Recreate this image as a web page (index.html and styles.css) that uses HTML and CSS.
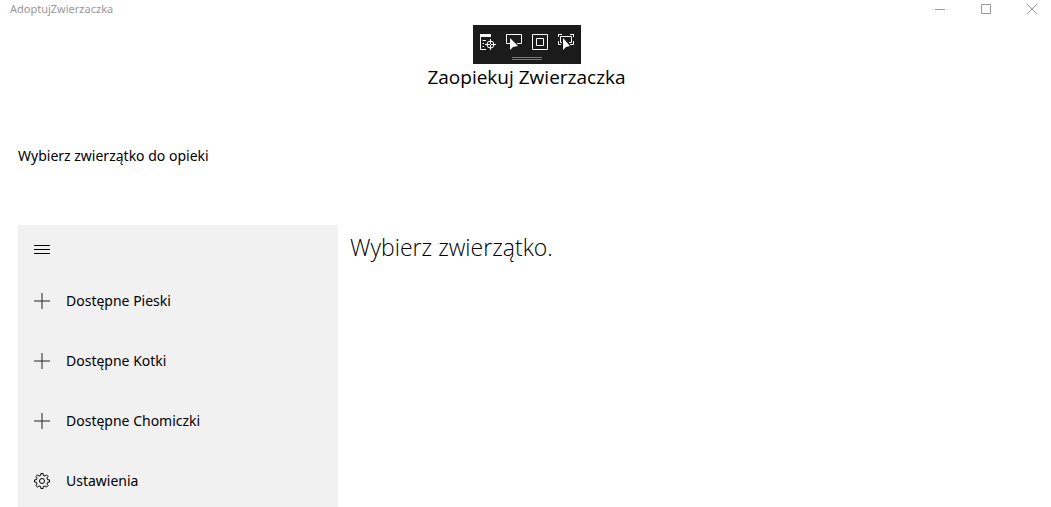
FILE: index.html
```html
<!DOCTYPE html>
<html lang="pl">
<head>
<meta charset="utf-8">
<meta name="viewport" content="width=device-width, initial-scale=1">
<title>AdoptujZwierzaczka</title>
<link rel="stylesheet" href="styles.css">
</head>
<body>
<div class="window">
  <header class="titlebar">
    <span class="app-name">AdoptujZwierzaczka</span>
    <div class="caption-buttons">
      <button class="caption-button" type="button" aria-label="Minimalizuj">
        <svg class="caption-icon" viewBox="0 0 10 10"><path d="M0 5.5H10"/></svg>
      </button>
      <button class="caption-button" type="button" aria-label="Maksymalizuj">
        <svg class="caption-icon" viewBox="0 0 10 10"><path d="M.5 .5H9.5V9.5H.5Z"/></svg>
      </button>
      <button class="caption-button" type="button" aria-label="Zamknij">
        <svg class="caption-icon" viewBox="0 0 10 10"><path d="M0 0L10 10M10 0L0 10"/></svg>
      </button>
    </div>
  </header>

  <div class="debug-bar" role="toolbar" aria-label="Narzędzia">
    <button class="debug-button" type="button" aria-label="Drzewo wizualne">
      <svg class="icon light" viewBox="0 0 16 16"><path d="M0 0H11V3H0Z" fill="#fff" stroke="none"/><path d="M.5 3V15.5H6M2.5 6.5H6M2.5 9.500H4M2.500 12.500H4M10.500 5V16M5 10.500H16"/><circle cx="10.500" cy="10.500" r="3.500"/><path d="M10 10H11V11H10Z" fill="#1b1b1b" stroke="none"/></svg>
    </button>
    <button class="debug-button" type="button" aria-label="Wybierz element">
      <svg class="icon light" viewBox="0 0 16 16"><path d="M4 9.500H.5V.5H15.500V9.500H11"/><path d="M4 4V16L7 13L12 12Z" fill="#fff" stroke="none"/></svg>
    </button>
    <button class="debug-button" type="button" aria-label="Pokaż układ">
      <svg class="icon light" viewBox="0 0 16 16"><path d="M.5 .5H15.500V15.500H.5ZM4.500 4.500H11.500V11.500H4.500Z"/></svg>
    </button>
    <button class="debug-button" type="button" aria-label="Śledź fokus">
      <svg class="icon light" viewBox="0 0 16 16"><path d="M0 .5H4M.5 0V3M12 .5H16M15.500 0V3M.5 7V10.500H3M15.500 7V10.500H12M4 8.500H2.500V2.500H13.500V8.500H11"/><path d="M5 4V16L8 13L12 12Z" fill="#fff" stroke="none"/></svg>
    </button>
    <span class="grip"></span>
  </div>

  <main class="page">
    <h1 class="page-title">Zaopiekuj Zwierzaczka</h1>
    <p class="prompt">Wybierz zwierzątko do opieki</p>
    <div class="split-view">
      <nav class="pane">
        <button class="menu-toggle" type="button" aria-label="Menu">
          <svg class="icon" viewBox="0 0 16 16"><path d="M0 4.500H16M0 8.500H16M0 12.500H16"/></svg>
        </button>
        <button class="nav-item" type="button">
          <svg class="icon plus" viewBox="0 0 16 16"><path d="M8 0V16M0 8H16"/></svg>
          <span>Dostępne Pieski</span>
        </button>
        <button class="nav-item" type="button">
          <svg class="icon plus" viewBox="0 0 16 16"><path d="M8 0V16M0 8H16"/></svg>
          <span>Dostępne Kotki</span>
        </button>
        <button class="nav-item" type="button">
          <svg class="icon plus" viewBox="0 0 16 16"><path d="M8 0V16M0 8H16"/></svg>
          <span>Dostępne Chomiczki</span>
        </button>
        <button class="nav-item" type="button">
          <svg class="icon" viewBox="0 0 16 16"><path stroke-linejoin="round" d="M6.700 2.400L6.900 .5H9.100L9.300 2.400L11 3.100L12.500 1.900L14.100 3.500L12.900 5L13.600 6.700L15.500 6.900V9.100L13.600 9.300L12.900 11L14.100 12.500L12.500 14.100L11 12.900L9.300 13.600L9.100 15.500H6.900L6.700 13.600L5 12.900L3.500 14.100L1.900 12.500L3.100 11L2.400 9.300L.5 9.100V6.900L2.400 6.700L3.100 5L1.900 3.500L3.500 1.900L5 3.100Z"/><circle cx="8" cy="8" r="2.500"/></svg>
          <span>Ustawienia</span>
        </button>
      </nav>
      <section class="content">
        <h2 class="content-title">Wybierz zwierzątko.</h2>
      </section>
    </div>
  </main>
</div>
</body>
</html>
```
FILE: styles.css
```css
* {
  box-sizing: border-box;
}

body {
  margin: 0;
  background: #fff;
  color: #000;
  font-family: "Noto Sans", "Open Sans", sans-serif;
  font-size: 14px;
  line-height: 20px;
}

button {
  border: 0;
  padding: 0;
  background: none;
  color: inherit;
  font: inherit;
}

.window {
  position: relative;
  display: flex;
  flex-direction: column;
  min-height: 100vh;
}

.titlebar {
  display: flex;
  justify-content: space-between;
  height: 18px;
  color: #999;
}

.app-name {
  padding-left: 10px;
  font-size: 11px;
  line-height: 18px;
}

.caption-buttons {
  display: flex;
  margin-right: -4px;
}

.caption-button {
  display: flex;
  align-items: center;
  justify-content: center;
  width: 46px;
}

.caption-icon {
  width: 10px;
  height: 10px;
  fill: none;
  stroke: currentColor;
}

.debug-bar {
  position: absolute;
  top: 25px;
  left: 50%;
  display: flex;
  gap: 10px;
  width: 108px;
  height: 39px;
  margin-left: -53px;
  padding: 9px 7px;
  background: #1b1b1b;
}

.debug-button {
  width: 16px;
  height: 16px;
}

.icon {
  display: block;
  flex: none;
  width: 16px;
  height: 16px;
  fill: none;
  stroke: #000;
}

.light {
  stroke: #fff;
}

.plus {
  stroke: #222;
}

.grip {
  position: absolute;
  bottom: 4px;
  left: 39px;
  width: 30px;
  height: 3px;
  border-top: 1px solid #777;
  border-bottom: 1px solid #777;
}

.page {
  display: flex;
  flex: 1;
  flex-direction: column;
  padding: 44px 0 0 18px;
}

.page-title {
  margin: 0 16px 0 0;
  font-family: "Open Sans", "Noto Sans", sans-serif;
  font-size: 19px;
  font-weight: 400;
  line-height: 30px;
  text-align: center;
}

.prompt {
  margin: 54px 0 59px;
}

.split-view {
  display: flex;
  flex: 1;
}

.pane {
  display: flex;
  flex-direction: column;
  flex: none;
  width: 320px;
  padding-top: 4px;
  background: #f1f1f1;
}

.menu-toggle {
  display: flex;
  align-items: center;
  width: 48px;
  height: 40px;
  margin-bottom: 2px;
  padding-left: 16px;
}

.nav-item {
  display: flex;
  align-items: center;
  gap: 16px;
  height: 60px;
  padding: 0 16px;
  text-align: left;
}

.content {
  flex: 1;
  padding: 6px 12px;
}

.content-title {
  margin: 0;
  font-family: "Open Sans", "Noto Sans", sans-serif;
  font-size: 23px;
  font-weight: 300;
  line-height: 32px;
}
```
